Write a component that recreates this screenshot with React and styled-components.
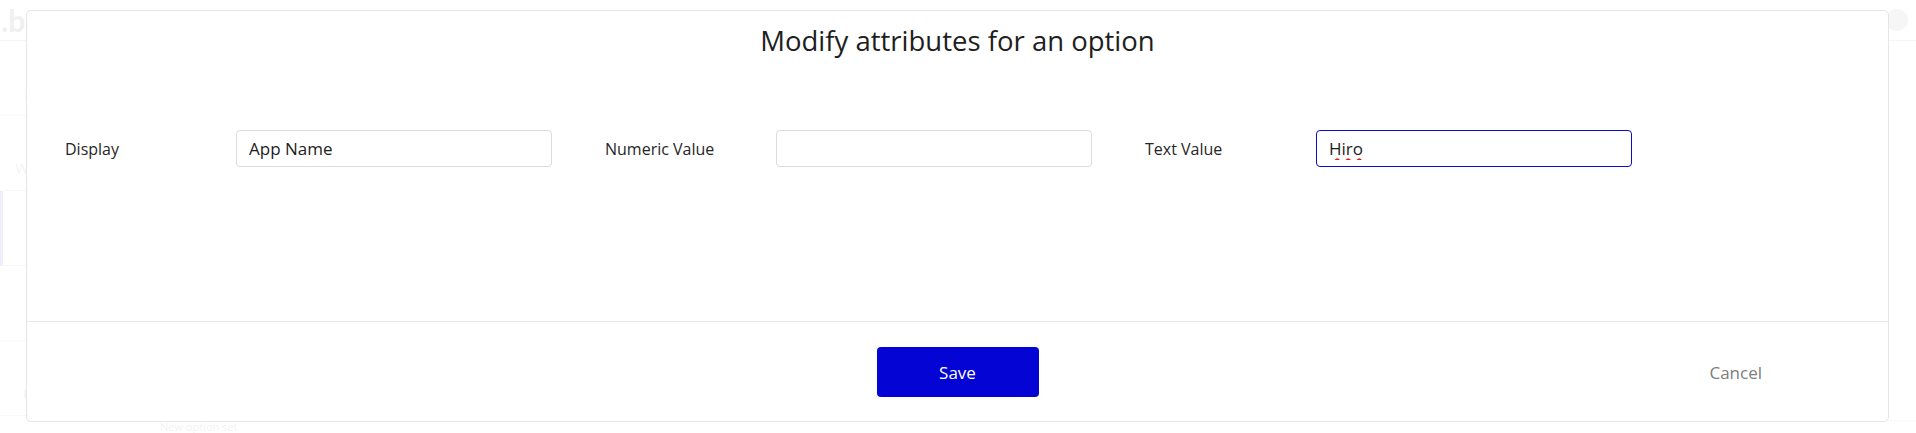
import React, { useState } from 'react';
import styled, { createGlobalStyle } from 'styled-components';

const GlobalStyle = createGlobalStyle`
  html, body {
    margin: 0;
    padding: 0;
    background: #ffffff;
    font-family: "Open Sans", "Noto Sans", sans-serif;
  }
  body {
    overflow: hidden;
  }
`;

const Page = styled.div`
  position: relative;
  width: 100vw;
  height: 433px;
  overflow: hidden;
  background: #ffffff;
`;

/* faded editor behind the dialog */
const Backdrop = styled.div`
  display: flex;
  flex-direction: column;
  height: 100%;
  color: #ececec;
`;

const TopBar = styled.div`
  display: flex;
  align-items: center;
  justify-content: space-between;
  height: 40px;
  border-bottom: 1px solid #f2f2f2;
  padding: 0 8px 0 0;
`;

const Logo = styled.div`
  font-family: "Lato", sans-serif;
  font-weight: 700;
  font-size: 30px;
  line-height: 40px;
  color: #e9e9e9;
  margin-left: 1px;
`;

const TopIcons = styled.div`
  display: flex;
  align-items: center;
  gap: 14px;
`;

const Dot = styled.span`
  width: ${p => p.size}px;
  height: ${p => p.size}px;
  border-radius: 50%;
  background: #f1f1f1;
`;

const Workspace = styled.div`
  flex: 1;
  display: flex;
`;

const Sidebar = styled.div`
  width: 90px;
  display: flex;
  flex-direction: column;
`;

const SideItem = styled.div`
  height: 75px;
  box-sizing: border-box;
  border-bottom: 1px solid #f4f4f4;
  border-left: 3px solid ${p => (p.active ? '#e6e6fa' : 'transparent')};
  display: flex;
  flex-direction: column;
  align-items: center;
  justify-content: flex-end;
  padding-bottom: 12px;
  font-size: 14px;
  color: #ededed;
`;

const Main = styled.div`
  flex: 1;
  display: flex;
  flex-direction: column;
  justify-content: flex-end;
`;

const BottomRow = styled.div`
  display: flex;
  height: 12px;
  border-top: 1px solid #f4f4f4;
  padding-left: 70px;
  font-size: 11px;
  line-height: 12px;
  color: #ededed;
`;

/* dialog */
const Overlay = styled.div`
  position: absolute;
  inset: 0;
  padding: 10px 27px 0 26px;
  background: rgba(255, 255, 255, 0.35);
`;

const Modal = styled.div`
  height: 412px;
  box-sizing: border-box;
  display: flex;
  flex-direction: column;
  background: #ffffff;
  border: 1px solid #e6e6e6;
  border-radius: 5px;
`;

const Header = styled.div`
  padding-top: 11px;
`;

const Title = styled.h2`
  margin: 0;
  text-align: center;
  font-size: 27.5px;
  line-height: 38px;
  font-weight: 400;
  color: #1e1e1e;
`;

const Body = styled.div`
  flex: 1;
  padding: 70px 38px 0;
`;

const FieldRow = styled.div`
  display: flex;
  gap: 53px;
`;

const Field = styled.label`
  display: flex;
  align-items: center;
`;

const Label = styled.span`
  width: 171px;
  font-size: 16px;
  color: #262626;
`;

const Input = styled.input`
  width: 316px;
  height: 37px;
  box-sizing: border-box;
  padding: 0 12px;
  border: 1px solid ${p => (p.$focused ? '#0c0cc8' : '#dcdcdc')};
  border-radius: 4px;
  font-family: "Open Sans", sans-serif;
  font-size: 17px;
  color: #1c1c1c;
  background: #ffffff;
  outline: none;
  text-decoration: ${p => (p.$misspelled ? 'underline wavy #e01e1e' : 'none')};
  text-decoration-thickness: 1.5px;
  text-underline-offset: 3px;
`;

const Footer = styled.div`
  height: 100px;
  box-sizing: border-box;
  border-top: 1px solid #e8e8e8;
  display: grid;
  grid-template-columns: 1fr auto 1fr;
  align-items: center;
  padding-top: 1px;
`;

const SaveButton = styled.button`
  grid-column: 2;
  width: 162px;
  height: 50px;
  border: none;
  border-radius: 4px;
  background: #0404d4;
  color: #ffffff;
  font-family: "Open Sans", sans-serif;
  font-size: 17px;
  cursor: pointer;
`;

const CancelButton = styled.button`
  grid-column: 3;
  justify-self: end;
  margin-right: 126px;
  padding: 0;
  border: none;
  background: none;
  color: #7d7d7d;
  font-family: "Open Sans", sans-serif;
  font-size: 17px;
  cursor: pointer;
`;

const fields = [
  { key: 'display', label: 'Display', value: 'App Name' },
  { key: 'numeric', label: 'Numeric Value', value: '' },
  { key: 'text', label: 'Text Value', value: 'Hiro', focused: true, misspelled: true },
];

const App = () => {
  const [values, setValues] = useState(
    Object.fromEntries(fields.map(f => [f.key, f.value]))
  );

  const onChange = key => e => setValues({ ...values, [key]: e.target.value });

  return (
    <Page>
      <GlobalStyle />

      <Backdrop>
        <TopBar>
          <Logo>.b</Logo>
          <TopIcons>
            <Dot size={10} />
            <Dot size={10} />
            <Dot size={22} />
          </TopIcons>
        </TopBar>
        <Workspace>
          <Sidebar>
            <SideItem>Design</SideItem>
            <SideItem>Workflow</SideItem>
            <SideItem active>Data</SideItem>
            <SideItem>Styles</SideItem>
            <SideItem>Plugins</SideItem>
          </Sidebar>
          <Main>
            <BottomRow>New option set</BottomRow>
          </Main>
        </Workspace>
      </Backdrop>

      <Overlay>
        <Modal>
          <Header>
            <Title>Modify attributes for an option</Title>
          </Header>

          <Body>
            <FieldRow>
              {fields.map(f => (
                <Field key={f.key}>
                  <Label>{f.label}</Label>
                  <Input
                    type="text"
                    value={values[f.key]}
                    onChange={onChange(f.key)}
                    $focused={f.focused}
                    $misspelled={f.misspelled}
                  />
                </Field>
              ))}
            </FieldRow>
          </Body>

          <Footer>
            <SaveButton>Save</SaveButton>
            <CancelButton>Cancel</CancelButton>
          </Footer>
        </Modal>
      </Overlay>
    </Page>
  );
};

export default App;
